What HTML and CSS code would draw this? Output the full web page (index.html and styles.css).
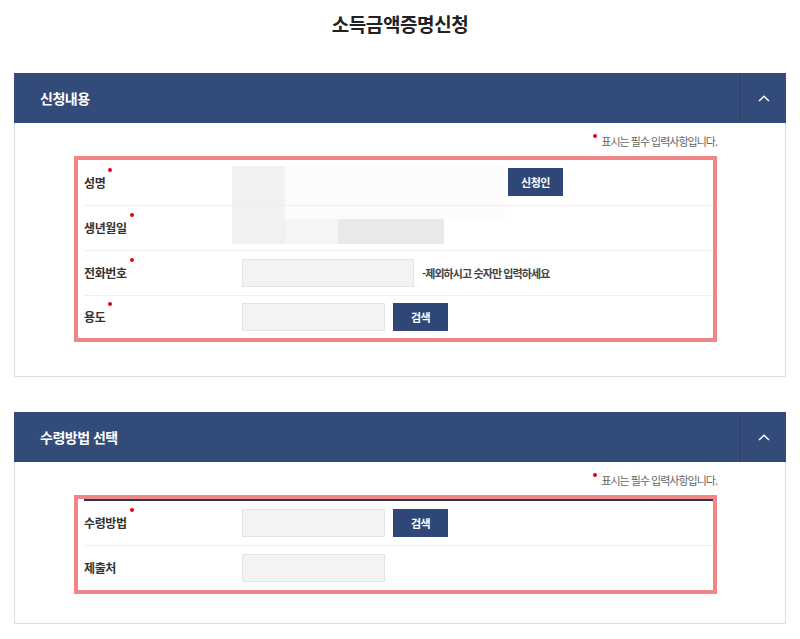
FILE: index.html
```html
<!DOCTYPE html>
<html lang="ko">
<head>
  <meta charset="UTF-8" />
  <meta name="viewport" content="width=device-width, initial-scale=1.0"/>
  <title>소득금액증명신청</title>
  <link rel="stylesheet" href="styles.css">
</head>
<body>
  <h1 class="page-title">소득금액증명신청</h1>

  <!-- 신청내용 -->
  <section class="panel">
    <div class="panel-head">
      <h2>신청내용</h2>
      <button class="toggle" type="button">
        <svg width="12" height="7" viewBox="0 0 12 7"><polyline points="1,6 6,1.2 11,6" fill="none" stroke="#fff" stroke-width="1.4"/></svg>
      </button>
    </div>
    <div class="panel-body">
      <p class="req-note"><span class="dot"></span>표시는 필수 입력사항입니다.</p>
      <div class="mark-box">
        <!-- masked personal data -->
        <div class="mask mask-a"></div>
        <div class="mask mask-b"></div>
        <div class="mask mask-c"></div>
        <div class="mask mask-d"></div>
        <table class="form-table">
          <tr>
            <th><span class="req">성명</span></th>
            <td><button class="btn btn-apply" type="button">신청인</button></td>
          </tr>
          <tr>
            <th><span class="req">생년월일</span></th>
            <td></td>
          </tr>
          <tr>
            <th><span class="req">전화번호</span></th>
            <td><input class="field field-wide" type="text"><span class="hint">-제외하시고 숫자만 입력하세요</span></td>
          </tr>
          <tr>
            <th><span class="req">용도</span></th>
            <td><input class="field" type="text"><button class="btn" type="button">검색</button></td>
          </tr>
        </table>
      </div>
    </div>
  </section>

  <!-- 수령방법 선택 -->
  <section class="panel">
    <div class="panel-head">
      <h2>수령방법 선택</h2>
      <button class="toggle" type="button">
        <svg width="12" height="7" viewBox="0 0 12 7"><polyline points="1,6 6,1.2 11,6" fill="none" stroke="#fff" stroke-width="1.4"/></svg>
      </button>
    </div>
    <div class="panel-body panel-body-sm">
      <p class="req-note"><span class="dot"></span>표시는 필수 입력사항입니다.</p>
      <div class="mark-box">
        <table class="form-table form-table-line">
          <tr>
            <th><span class="req">수령방법</span></th>
            <td><input class="field" type="text"><button class="btn" type="button">검색</button></td>
          </tr>
          <tr>
            <th>제출처</th>
            <td><input class="field" type="text"></td>
          </tr>
        </table>
      </div>
    </div>
  </section>
</body>
</html>
```

FILE: styles.css
```css
body {
  margin: 0;
  background: #fff;
  color: #333;
  font-family: "Noto Sans CJK KR", "Noto Sans", sans-serif;
}

.page-title {
  margin: 0 0 35px;
  padding-top: 10px;
  font-size: 19px;
  line-height: 28px;
  letter-spacing: -0.4px;
  font-weight: 700;
  text-align: center;
  color: #222;
}

.panel {
  margin: 0 14px 35px;
}

.panel-head {
  display: flex;
  align-items: center;
  height: 50px;
  background: #334b79;
}

.panel-head h2 {
  flex: 1;
  margin: 0;
  padding-left: 26px;
  font-size: 14px;
  letter-spacing: -0.5px;
  font-weight: 700;
  color: #fff;
}

.toggle {
  width: 46px;
  height: 50px;
  padding: 0;
  border: none;
  border-left: 1px solid #2b416c;
  box-shadow: inset 1px 0 0 #3e5584;
  background: transparent;
  display: flex;
  align-items: center;
  justify-content: center;
  cursor: pointer;
}

.panel-body {
  padding: 9px 68px 34px 59px;
  border: 1px solid #dedede;
  border-top: none;
}

.panel-body-sm {
  padding-bottom: 29px;
}

/* required notice */
.req-note {
  margin: 0 0 6px;
  text-align: right;
  font-size: 11px;
  line-height: 18px;
  letter-spacing: -1px;
  color: #666;
}

.req-note .dot {
  display: inline-block;
  width: 4px;
  height: 4px;
  margin-right: 4px;
  border-radius: 50%;
  background: #e60012;
  vertical-align: 8px;
}

.mark-box {
  position: relative;
  padding-left: 6px;
  border: 4px solid #f28585;
}

/* blurred personal data */
.mask {
  position: absolute;
}

.mask-d { left: 207px; top: 6px; width: 220px; height: 53px; background: #fcfcfc; }
.mask-a { left: 154px; top: 6px; width: 53px; height: 78px; background: #f1f1f1; }
.mask-b { left: 207px; top: 59px; width: 53px; height: 25px; background: #f5f5f5; }
.mask-c { left: 260px; top: 59px; width: 106px; height: 25px; background: #e9e9e9; }

.form-table {
  position: relative;
  width: 100%;
  border-collapse: collapse;
}

.form-table tr {
  height: 45px;
  border-bottom: 1px solid #efefef;
}

.form-table tr:last-child {
  height: 43px;
  border-bottom: none;
}

.form-table-line {
  border-top: 2px solid #2c3550;
}

.form-table-line tr,
.form-table-line tr:last-child {
  height: 45px;
}

.form-table th {
  width: 158px;
  padding: 0;
  text-align: left;
  font-size: 12px;
  letter-spacing: -0.4px;
  font-weight: 700;
  color: #333;
}

.form-table td {
  padding: 0;
  font-size: 0;
}

.req {
  position: relative;
}

.req::after {
  content: "";
  position: absolute;
  right: -7px;
  top: -6px;
  width: 4px;
  height: 4px;
  border-radius: 50%;
  background: #e60012;
}

.field {
  box-sizing: border-box;
  width: 143px;
  height: 28px;
  margin: 0;
  border: 1px solid #e4e4e4;
  background: #f3f3f3;
  vertical-align: middle;
}

.field-wide {
  width: 172px;
}

.btn {
  width: 55px;
  height: 28px;
  margin-left: 8px;
  padding: 0;
  border: none;
  background: #2f4776;
  color: #fff;
  font-family: inherit;
  font-size: 11px;
  letter-spacing: -0.5px;
  font-weight: 700;
  vertical-align: middle;
  cursor: pointer;
}

.btn-apply {
  margin-left: 266px;
}

.hint {
  margin-left: 8px;
  font-size: 11px;
  letter-spacing: -0.9px;
  font-weight: 700;
  color: #444;
  vertical-align: middle;
}
```
